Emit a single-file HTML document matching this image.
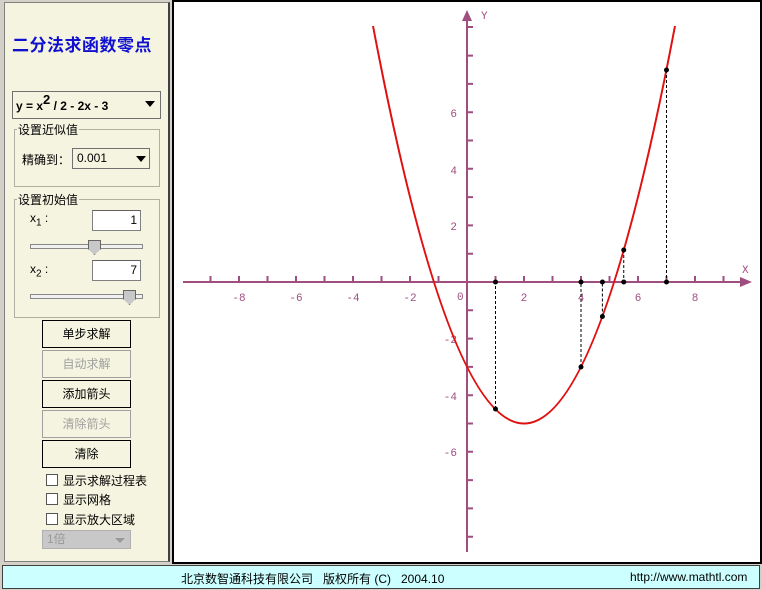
<!DOCTYPE html>
<html><head><meta charset="utf-8"><style>
*{margin:0;padding:0;box-sizing:border-box}
body{width:762px;height:590px;background:#d4d0c8;position:relative;overflow:hidden;font-family:"Liberation Sans","Noto Sans CJK SC",sans-serif;font-size:12px;color:#000}
.a{position:absolute}
#left{left:4px;top:2px;width:166px;height:560px;background:#f5f4e0;border:1px solid #808080;border-right:2px solid #404040}
.grp{border:1px solid #b0b0a0;}
.gl{background:#f5f4e0;padding:0 1px;font-size:12px}
.inp{background:#fff;border:1px solid #808080;border-top-color:#606060;text-align:right;padding-right:3px;font-size:12px;line-height:19px}
.btn{left:42px;width:89px;height:28px;border:1px solid #000;background:#f5f4e0;text-align:center;line-height:26px;font-size:12px}
.dis{border-color:#a0a0a0;color:#a0a0a0}
.cb{left:46px;width:12px;height:12px;border:1px solid #555;background:#fff}
.ct{left:63px;font-size:12px}
.track{left:30px;width:113px;height:5px;border:1px solid #888;background:#f0f0f0}
</style></head><body>
<div class="a" id="left"></div>
<div class="a" style="left:12px;top:31px;font-size:17px;font-weight:bold;color:#1010d0;letter-spacing:0.5px">二分法求函数零点</div>
<div class="a" style="left:12px;top:91px;width:149px;height:28px;border:1px solid #707070;background:#f5f4e0"></div>
<div class="a" style="left:16px;top:98px;font-size:12px;font-weight:bold">y = x<span style="font-size:13px;position:relative;top:-6px">2</span> / 2 - 2x - 3</div>
<div class="a" style="left:145px;top:101px;width:0;height:0;border-left:5px solid transparent;border-right:5px solid transparent;border-top:6px solid #000"></div>
<div class="a grp" style="left:14px;top:129px;width:146px;height:58px"></div>
<div class="a gl" style="left:17px;top:121px">设置近似值</div>
<div class="a" style="left:22px;top:151px">精确到：</div>
<div class="a" style="left:72px;top:148px;width:78px;height:21px;border:1px solid #707070;background:#f5f4e0"></div>
<div class="a" style="left:77px;top:151px">0.001</div>
<div class="a" style="left:136px;top:156px;border-left:5px solid transparent;border-right:5px solid transparent;border-top:6px solid #000"></div>
<div class="a grp" style="left:14px;top:199px;width:146px;height:119px"></div>
<div class="a gl" style="left:17px;top:191px">设置初始值</div>
<div class="a" style="left:30px;top:211px">x<sub style="font-size:10px">1</sub> :</div>
<div class="a inp" style="left:92px;top:210px;width:49px;height:21px">1</div>
<div class="a track" style="left:30px;top:244px"></div>
<div class="a" style="left:88px;top:240px;width:13px;height:15px;background:#c8c8c8;border:1px solid #666;clip-path:polygon(0 0,100% 0,100% 60%,50% 100%,0 60%)"></div>
<div class="a" style="left:30px;top:262px">x<sub style="font-size:10px">2</sub> :</div>
<div class="a inp" style="left:92px;top:260px;width:49px;height:21px">7</div>
<div class="a track" style="left:30px;top:294px"></div>
<div class="a" style="left:123px;top:290px;width:13px;height:15px;background:#c8c8c8;border:1px solid #666;clip-path:polygon(0 0,100% 0,100% 60%,50% 100%,0 60%)"></div>
<div class="a btn" style="top:320px">单步求解</div>
<div class="a btn dis" style="top:350px">自动求解</div>
<div class="a btn" style="top:380px">添加箭头</div>
<div class="a btn dis" style="top:410px">清除箭头</div>
<div class="a btn" style="top:440px">清除</div>
<div class="a cb" style="top:474px"></div><div class="a ct" style="top:472px">显示求解过程表</div>
<div class="a cb" style="top:493px"></div><div class="a ct" style="top:491px">显示网格</div>
<div class="a cb" style="top:513px"></div><div class="a ct" style="top:511px">显示放大区域</div>
<div class="a" style="left:42px;top:530px;width:89px;height:19px;background:#c8c8c8;border:1px solid #b0b0b0;color:#999;padding-left:4px;line-height:17px">1倍</div>
<div class="a" style="left:115px;top:538px;border-left:5px solid transparent;border-right:5px solid transparent;border-top:5px solid #999"></div>

<div class="a" style="left:172px;top:0;width:590px;height:564px;background:#fff;border:2px solid #000"></div>
<svg class="a" style="left:0;top:0" width="762" height="590">
<g stroke="#a04e80" stroke-width="2" fill="none">
<line x1="183" y1="282" x2="748" y2="282"/>
<line x1="467" y1="20" x2="467" y2="552"/>
<path d="M210.5 282v-6M239 282v-6M267.5 282v-6M296 282v-6M324.5 282v-6M353 282v-6M381.5 282v-6M410 282v-6M438.5 282v-6M495.5 282v-6M524 282v-6M552.5 282v-6M581 282v-6M609.5 282v-6M638 282v-6M666.5 282v-6M695 282v-6M723.5 282v-6"/>
<path d="M467 27h6M467 55.6h6M467 83.9h6M467 112.2h6M467 140.5h6M467 168.8h6M467 197.1h6M467 225.4h6M467 253.7h6M467 310.3h6M467 338.6h6M467 366.9h6M467 395.2h6M467 423.5h6M467 451.8h6M467 480.1h6M467 508.4h6M467 536.7h6"/>
</g>
<polygon points="752,282 740,277 740,287" fill="#a04e80"/>
<polygon points="467,10 462,21 472,21" fill="#a04e80"/>
<g fill="#a04e80" font-family="Liberation Mono,monospace" font-size="11">
<text x="742" y="273">X</text><text x="481" y="19">Y</text>
<g text-anchor="middle"><text x="239" y="301">-8</text><text x="296" y="301">-6</text><text x="353" y="301">-4</text><text x="410" y="301">-2</text><text x="524" y="301">2</text><text x="581" y="301">4</text><text x="638" y="301">6</text><text x="695" y="301">8</text></g>
<text x="457" y="300">0</text>
<g text-anchor="end"><text x="457" y="117">6</text><text x="457" y="174">4</text><text x="457" y="230">2</text><text x="457" y="343">-2</text><text x="457" y="400">-4</text><text x="457" y="456">-6</text></g>
</g>
<path fill="none" stroke="#e01010" stroke-width="2" d="M373,26 Q524,821 675,26"/>
<g stroke="#000" stroke-dasharray="3,2" stroke-width="1">
<line x1="495.5" y1="409" x2="495.5" y2="282"/><line x1="581" y1="367" x2="581" y2="282"/><line x1="602.4" y1="316.5" x2="602.4" y2="282"/><line x1="623.75" y1="250" x2="623.75" y2="282"/><line x1="666.5" y1="70" x2="666.5" y2="282"/>
</g>
<g fill="#000"><circle cx="495.5" cy="409" r="2.5"/><circle cx="495.5" cy="282" r="2.5"/><circle cx="581" cy="367" r="2.5"/><circle cx="581" cy="282" r="2.5"/><circle cx="602.4" cy="316.5" r="2.5"/><circle cx="602.4" cy="282" r="2.5"/><circle cx="623.75" cy="250" r="2.5"/><circle cx="623.75" cy="282" r="2.5"/><circle cx="666.5" cy="70" r="2.5"/><circle cx="666.5" cy="282" r="2.5"/></g>
</svg>
<div class="a" style="left:2px;top:565px;width:758px;height:24px;background:#ccffff;border:1px solid #404040"></div>
<div class="a" style="left:181px;top:570px">北京数智通科技有限公司 &nbsp; 版权所有 (C) &nbsp; 2004.10</div>
<div class="a" style="left:630px;top:570px">http://www.mathtl.com</div>
</body></html>
